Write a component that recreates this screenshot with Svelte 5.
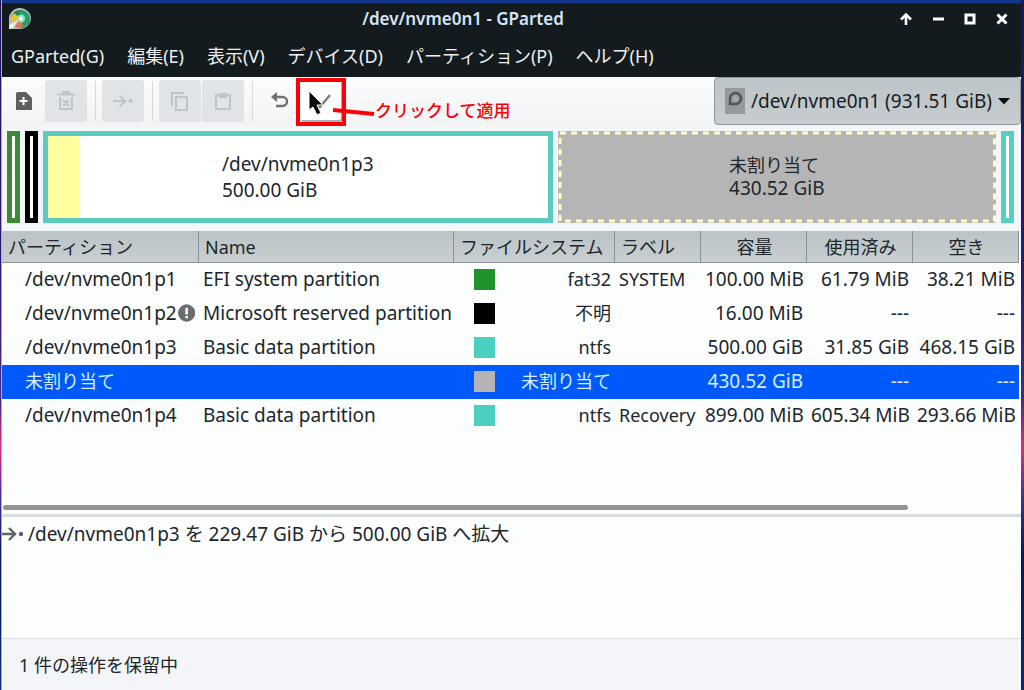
<script>
  const menus = ['GParted(G)', '編集(E)', '表示(V)', 'デバイス(D)', 'パーティション(P)', 'ヘルプ(H)'];

  const columns = [
    { label: 'パーティション', cls: 'c-part' },
    { label: 'Name', cls: 'c-name' },
    { label: 'ファイルシステム', cls: 'c-fs' },
    { label: 'ラベル', cls: 'c-label' },
    { label: '容量', cls: 'c-size' },
    { label: '使用済み', cls: 'c-size' },
    { label: '空き', cls: 'c-size' }
  ];

  const rows = [
    { part: '/dev/nvme0n1p1', name: 'EFI system partition', color: '#22922f', fs: 'fat32', label: 'SYSTEM', size: '100.00 MiB', used: '61.79 MiB', free: '38.21 MiB' },
    { part: '/dev/nvme0n1p2', warn: true, name: 'Microsoft reserved partition', color: '#000000', fs: '不明', label: '', size: '16.00 MiB', used: '---', free: '---' },
    { part: '/dev/nvme0n1p3', name: 'Basic data partition', color: '#4bd0c0', fs: 'ntfs', label: '', size: '500.00 GiB', used: '31.85 GiB', free: '468.15 GiB' },
    { part: '未割り当て', name: '', color: '#b4b2b4', fs: '未割り当て', label: '', size: '430.52 GiB', used: '---', free: '---' },
    { part: '/dev/nvme0n1p4', name: 'Basic data partition', color: '#4bd0c0', fs: 'ntfs', label: 'Recovery', size: '899.00 MiB', used: '605.34 MiB', free: '293.66 MiB' }
  ];

  let selected = $state(3);
</script>

<div class="desktop">
  <div class="window">
    <header>
      <div class="titlebar">
        <svg class="logo" viewBox="0 0 22 22" aria-hidden="true">
          <path d="M0 21V11A11 10.500 0 1 1 11 21Z" fill="#b9beb9" />
          <path d="M11 2a9 9 0 1 1-3 17l3-8Z" fill="#2c9a68" />
          <path d="M2 10a9 9 0 0 1 9-8v9Z" fill="#23845c" />
          <path d="M2 13V9l3-4 6 5-5 4Z" fill="#f0c030" />
          <path d="M6 19l5-8 3 7-4 2Z" fill="#ef7350" />
          <circle cx="12" cy="10.500" r="4" fill="#8fdcc0" />
          <circle cx="12" cy="10.500" r="2" fill="#e9fff5" />
          <path d="M0 21V17L9 12 4 20Z" fill="#f3efe9" />
        </svg>
        <h1>/dev/nvme0n1 - GParted</h1>
        <div class="controls">
          <button aria-label="Shade"><svg viewBox="0 0 14 14"><path d="M7 13V3M2 7.500L7 2.500l5 5" fill="none" stroke="#fff" stroke-width="2.600" /></svg></button>
          <button aria-label="Minimize"><svg viewBox="0 0 14 14"><path d="M2 7h11" stroke="#fff" stroke-width="3" /></svg></button>
          <button aria-label="Maximize"><svg viewBox="0 0 14 14"><rect x="3" y="3" width="8" height="8" fill="none" stroke="#fff" stroke-width="3" /></svg></button>
          <button aria-label="Close"><svg viewBox="0 0 14 14"><path d="M2.500 2.500l9 9M11.500 2.500l-9 9" stroke="#fff" stroke-width="3" /></svg></button>
        </div>
      </div>
      <nav>
        {#each menus as menu}
          <button>{menu}</button>
        {/each}
      </nav>
    </header>

    <div class="toolbar">
      <button class="tool" aria-label="New">
        <svg viewBox="0 0 20 20"><path d="M4 1h8l6 6v12H2V3a2 2 0 0 1 2-2Z" fill="#5c6063" /><path d="M9.500 6v8M5.500 10h8" stroke="#fff" stroke-width="2" /></svg>
      </button>
      <button class="tool" disabled aria-label="Delete">
        <svg viewBox="0 0 20 20" fill="none" stroke="#c1c4c6" stroke-width="2"><path d="M1 3.500h18M7 3V1h6v2M4 6v12h12V6M7 9l6 6M13 9l-6 6" /></svg>
      </button>
      <span class="sep"></span>
      <button class="tool" disabled aria-label="Resize/Move">
        <svg viewBox="0 0 22 20"><path d="M0 10h13M7.500 4l6 6-6 6" fill="none" stroke="#c1c4c6" stroke-width="2" /><circle cx="19.500" cy="10" r="2.200" fill="#c1c4c6" /></svg>
      </button>
      <span class="sep"></span>
      <button class="tool" disabled aria-label="Copy">
        <svg viewBox="0 0 20 20" fill="none" stroke="#c1c4c6" stroke-width="2"><path d="M2 15V2h12M6 6h11v13H6Z" /></svg>
      </button>
      <button class="tool" disabled aria-label="Paste">
        <svg viewBox="0 0 20 20" fill="none" stroke="#c1c4c6" stroke-width="2"><path d="M3 4h14v14H3Z" /><path d="M7 3h6v3H7Z" fill="#c1c4c6" /></svg>
      </button>
      <span class="sep"></span>
      <button class="tool" aria-label="Undo">
        <svg viewBox="0 0 20 20"><path d="M4 6h8.500a4.500 4.500 0 0 1 0 9H6" fill="none" stroke="#6e7173" stroke-width="2.400" /><path d="M7 1v10L1 6Z" fill="#6e7173" /></svg>
      </button>
      <div class="apply">
        <button class="tool hover" aria-label="Apply">
          <svg viewBox="0 0 20 20"><path d="M3 11l5 5L18 4" fill="none" stroke="#7b7e80" stroke-width="2.500" /></svg>
        </button>
        <div class="callout">
          <svg class="mark" viewBox="0 0 84 52" aria-hidden="true">
            <path d="M15 15v19l4-3 4 8 4-2-4-8h6Z" fill="#0c0c0c" stroke="#fff" stroke-width="1" />
            <rect x="4" y="4" width="46" height="44" fill="none" stroke="#fb0007" stroke-width="4" />
            <path d="M39 34l41 4" stroke="#fb0007" stroke-width="4" />
          </svg>
          <span>クリックして適用</span>
        </div>
      </div>
      <div class="device">
        <svg class="disk" viewBox="0 0 20 26" aria-hidden="true">
          <rect width="20" height="26" fill="#96999a" />
          <path d="M5 16V10.500a5.500 5.500 0 1 1 5.500 5.500Z" fill="none" stroke="#505456" stroke-width="2.500" />
          <circle cx="10.500" cy="10.500" r="2.500" fill="#a9acad" />
        </svg>
        <select aria-label="Device">
          <option>/dev/nvme0n1 (931.51 GiB)</option>
        </select>
        <svg class="caret" viewBox="0 0 12 8" aria-hidden="true"><path d="M0 1h12L6 7.500Z" fill="#111" /></svg>
      </div>
    </div>

    <div class="map">
      <div class="block slim green"></div>
      <div class="block slim black"></div>
      <div class="block main">
        <span class="used"></span>
        <p>/dev/nvme0n1p3<br />500.00 GiB</p>
      </div>
      <div class="block free">
        <svg aria-hidden="true"><rect x="2" y="2" /></svg>
        <p><span class="ja">未割り当て</span><br />430.52 GiB</p>
      </div>
      <div class="block slim teal"></div>
    </div>

    <div class="list">
      <table>
        <thead>
          <tr>
            {#each columns as col}
              <th class={col.cls}>{col.label}</th>
            {/each}
          </tr>
        </thead>
        <tbody>
          {#each rows as row, i}
            <tr class:selected={selected === i} onclick={() => (selected = i)}>
              <td class="first" class:ja={row.part === '未割り当て'}>
                <div class="cell">
                  {row.part}
                  {#if row.warn}
                    <svg class="warn" viewBox="0 0 18 18" aria-hidden="true"><circle cx="9" cy="9" r="9" fill="#6b6c6e" /><path d="M9 3.500v7M9 12v2.500" stroke="#fff" stroke-width="2.600" /></svg>
                  {/if}
                </div>
              </td>
              <td>{row.name}</td>
              <td class="fs">
                <div class="cell between"><i class="swatch" style="background: {row.color}"></i>{row.fs}</div>
              </td>
              <td class="ja">{row.label}</td>
              <td class="num">{row.size}</td>
              <td class="num">{row.used}</td>
              <td class="num">{row.free}</td>
            </tr>
          {/each}
        </tbody>
      </table>
      <div class="scroll"></div>
    </div>

    <div class="pending">
      <svg viewBox="0 0 22 18" aria-hidden="true"><path d="M0 9h13M7 3l6 6-6 6" fill="none" stroke="#5f6365" stroke-width="2.400" /><circle cx="19" cy="9" r="2.200" fill="#5f6365" /></svg>
      <span>/dev/nvme0n1p3 を 229.47 GiB から 500.00 GiB へ拡大</span>
    </div>

    <footer>1 件の操作を保留中</footer>
  </div>
</div>

<style>
  :global(body) {
    margin: 0;
  }
  .desktop {
    box-sizing: border-box;
    min-height: 100vh;
    padding: 0 3px 0 1px;
    display: flex;
    background: linear-gradient(#20145a, #2a1a78 40%, #4a2a80 58%, #e02a8a 65%, #40309a 72%, #0a1a60 80%, #0a2878);
    font-family: 'Noto Sans', 'Noto Sans CJK JP', sans-serif;
    font-size: 18px;
    line-height: 26px;
    color: #20262b;
  }
  .window {
    box-sizing: border-box;
    flex: 1;
    min-width: 0;
    display: flex;
    flex-direction: column;
    background: #f3f5f8;
    border-left: 1px solid #a9a9e6;
  }
  button {
    font: inherit;
    color: inherit;
    border: 0;
    padding: 0;
    background: none;
  }
  svg {
    display: block;
  }
  header {
    background: #131b1e;
    color: #eef0f0;
    border-top: 3px solid #14358c;
    box-shadow: inset 0 1px #14243c;
  }
  .titlebar {
    height: 32px;
    display: grid;
    grid-template-columns: 1fr auto 1fr;
    align-items: center;
    padding: 0 12px 0 7px;
  }
  .logo {
    width: 22px;
    height: 22px;
  }
  h1 {
    margin: 0 92px 0 0;
    font-size: 17px;
    font-weight: 600;
    color: #d6e4f6;
  }
  .controls {
    display: flex;
    justify-content: flex-end;
    gap: 18px;
  }
  .controls svg {
    width: 14px;
    height: 14px;
  }
  nav {
    height: 42px;
    display: flex;
    align-items: center;
    gap: 23px;
    padding-left: 9px;
  }
  nav button {
    white-space: nowrap;
  }
  .toolbar {
    height: 48px;
    padding-left: 1px;
    display: flex;
    align-items: center;
    background: linear-gradient(#fbfcfd, #f1f3f5);
  }
  .tool {
    width: 42px;
    height: 42px;
    display: grid;
    place-items: center;
    border-radius: 3px;
  }
  .tool:disabled {
    background: #e1e4e6;
    margin-right: 1px;
  }
  .tool svg {
    width: 20px;
    height: 20px;
  }
  .sep {
    width: 1px;
    height: 40px;
    margin: 0 6px 0 7px;
    background: #d6d9dc;
  }
  .hover {
    background: #fff;
    box-shadow: inset -2px -2px #a5b0bd;
  }
  .apply {
    position: relative;
  }
  .callout {
    position: absolute;
    left: -7px;
    top: -4px;
    display: flex;
    align-items: center;
    color: #fb0007;
    font-size: 17px;
    font-weight: 500;
    white-space: nowrap;
    pointer-events: none;
  }
  .mark {
    width: 84px;
    height: 52px;
    margin-right: -3px;
  }
  .callout span {
    padding-top: 18px;
  }
  .device {
    margin-left: auto;
    box-sizing: border-box;
    height: 48px;
    display: grid;
    align-items: center;
    border: 1px solid #8f989b;
    border-radius: 4px;
    background: linear-gradient(#bcc5c8, #c6cccf);
  }
  .device > * {
    grid-area: 1 / 1;
  }
  .device select {
    appearance: none;
    height: 46px;
    padding: 0 28px 0 36px;
    border: 0;
    background: none;
    font: inherit;
    font-size: 19px;
    color: #161c20;
  }
  .disk {
    width: 20px;
    height: 26px;
    margin-left: 10px;
  }
  .caret {
    width: 12px;
    height: 8px;
    margin-right: 10px;
    justify-self: end;
  }
  .map {
    display: flex;
    gap: 5px;
    padding: 6px 7px 8px 5px;
    font-size: 19px;
  }
  .block {
    position: relative;
    box-sizing: border-box;
    height: 92px;
    display: flex;
    align-items: center;
    justify-content: center;
    background: #fff;
    border: 5px solid;
  }
  .slim {
    width: 13px;
  }
  .green {
    border-color: #3a8a38;
  }
  .black {
    border-color: #000;
  }
  .teal {
    border-color: #55d0c0;
  }
  .main {
    flex: 499;
    border-color: #5accbf;
  }
  .free {
    flex: 438;
    border: 0;
    background: #b6b5b6;
  }
  .free svg {
    position: absolute;
    inset: 0;
    width: 100%;
    height: 100%;
  }
  .free rect {
    width: calc(100% - 4px);
    height: calc(100% - 4px);
    fill: none;
    stroke: #fffcc4;
    stroke-width: 3;
    stroke-dasharray: 6 5;
  }
  .used {
    position: absolute;
    left: 0;
    top: 0;
    bottom: 0;
    width: 32px;
    background: #ffff9f;
  }
  .block p {
    margin: 0;
    color: #20262b;
  }
  .free p {
    line-height: 23px;
  }
  .list {
    flex: 1;
    display: flex;
    flex-direction: column;
    justify-content: space-between;
    padding-right: 2px;
    background: #fcfefe;
    border-bottom: 3px solid #d8dcde;
  }
  table {
    width: 100%;
    table-layout: fixed;
    border-collapse: separate;
    border-spacing: 0;
    white-space: nowrap;
    line-height: 24px;
  }
  th {
    box-sizing: border-box;
    height: 32px;
    padding: 0 4px 0 6px;
    font-weight: 400;
    text-align: left;
    background: linear-gradient(#bac3c6, #c8cfd1);
    border-right: 1px solid #899194;
    border-bottom: 1px solid #8d9598;
  }
  .c-part {
    width: 197px;
  }
  .c-fs {
    width: 161px;
  }
  .c-label {
    width: 86px;
  }
  .c-size {
    width: 106px;
    text-align: center;
  }
  td {
    height: 32px;
    padding: 0 4px 2px;
    font-size: 19px;
  }
  td.first {
    padding-left: 23px;
  }
  td.fs {
    padding-left: 20px;
    font-size: 18px;
  }
  .ja {
    font-size: 18px;
  }
  .cell {
    display: flex;
    align-items: center;
    gap: 1px;
  }
  .between {
    justify-content: space-between;
  }
  .num {
    text-align: right;
  }
  .swatch {
    width: 21px;
    height: 21px;
  }
  .warn {
    width: 18px;
    height: 18px;
  }
  .selected {
    background: #0059fb;
    color: #d3efff;
  }
  .scroll {
    width: 89%;
    height: 5px;
    margin: 0 1px 4px;
    border-radius: 3px;
    background: #919495;
  }
  .pending {
    box-sizing: border-box;
    height: 121px;
    padding-top: 4px;
    display: flex;
    align-items: flex-start;
    gap: 4px;
    background: #fcfefe;
    font-size: 19px;
  }
  .pending svg {
    width: 22px;
    height: 18px;
    margin-top: 4px;
  }
  footer {
    box-sizing: border-box;
    height: 52px;
    padding: 13px 17px;
    border-top: 1px solid #dcdfe1;
  }
</style>
